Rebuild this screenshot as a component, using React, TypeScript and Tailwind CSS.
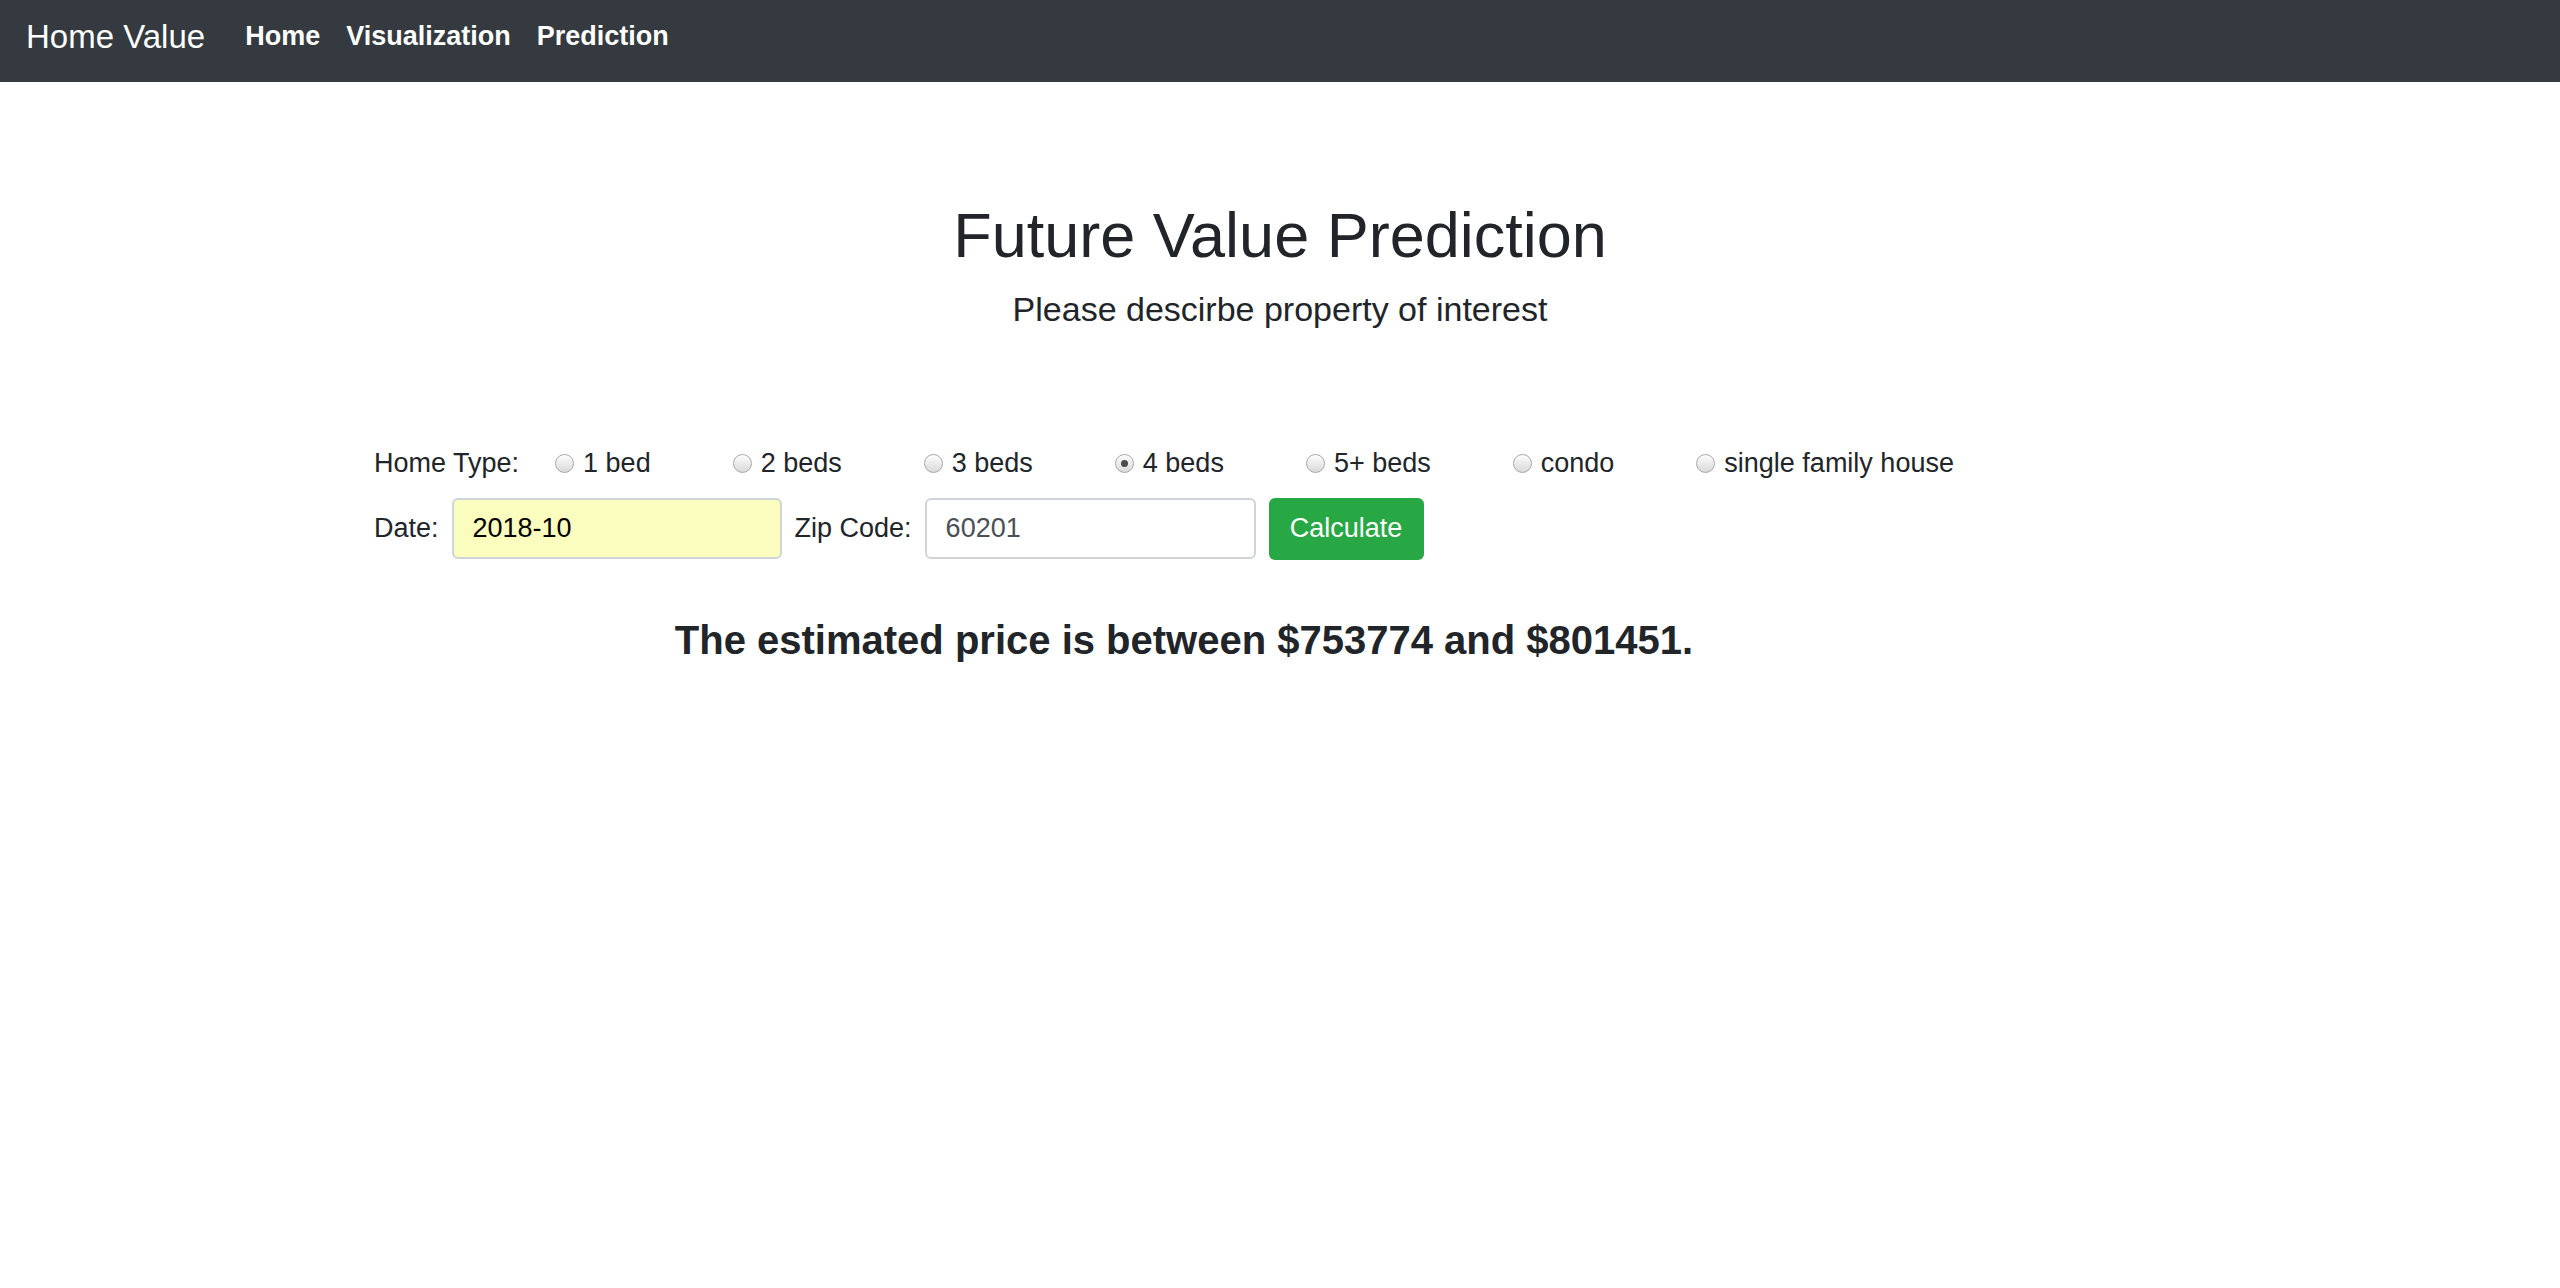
import { useState } from "react";

const homeTypes = ["1 bed", "2 beds", "3 beds", "4 beds", "5+ beds", "condo", "single family house"];

function Radio({ label, checked, onSelect }: { label: string; checked: boolean; onSelect: () => void }) {
  return (
    <label className="mr-[82px] flex shrink-0 cursor-pointer items-center whitespace-nowrap" onClick={onSelect}>
      <span className="relative flex h-[19px] w-[19px] items-center justify-center rounded-full border border-[#a7a7a7] bg-gradient-to-b from-[#fdfdfd] to-[#d9d9d9] shadow-[inset_0_1px_1px_rgba(255,255,255,0.8)]">
        {checked && <span className="h-[7px] w-[7px] rounded-full bg-[#4b4b4b]" />}
      </span>
      <span className="ml-[9px]">{label}</span>
    </label>
  );
}

export default function App() {
  const [homeType, setHomeType] = useState("4 beds");
  const [date, setDate] = useState("2018-10");
  const [zip, setZip] = useState("60201");

  return (
    <div className="min-h-screen bg-white text-[#212529] font-['Liberation_Sans',Arial,sans-serif]">
      {/* Navbar */}
      <nav className="flex h-[82px] items-center bg-[#343a40] px-[26px] pb-[10px]">
        <span className="mr-[40px] text-[33px] leading-none text-white">Home Value</span>
        <div className="flex gap-[26px] text-[27px] font-bold text-white">
          <a href="#">Home</a>
          <a href="#">Visualization</a>
          <a href="#">Prediction</a>
        </div>
      </nav>

      {/* Header */}
      <div className="mt-[116px] text-center">
        <h1 className="text-[63px] leading-[1.2]">Future Value Prediction</h1>
        <p className="mt-[10px] text-[34px] leading-[1.5]">Please descirbe property of interest</p>
      </div>

      {/* Form */}
      <div className="ml-[374px] mt-[109px] w-[1620px]">
        <div className="flex h-[40px] items-center whitespace-nowrap text-[27px]">
          <span className="mr-[36px] shrink-0">Home Type:</span>
          {homeTypes.map((t) => (
            <Radio key={t} label={t} checked={homeType === t} onSelect={() => setHomeType(t)} />
          ))}
        </div>

        <div className="mt-[14px] flex items-center gap-[13px] whitespace-nowrap text-[27px]">
          <span>Date:</span>
          <input
            value={date}
            onChange={(e) => setDate(e.target.value)}
            className="h-[61px] w-[330px] rounded-[6px] border-2 border-[#ced4da] bg-[#fafdbd] px-[19px] text-black outline-none"
          />
          <span>Zip Code:</span>
          <input
            value={zip}
            onChange={(e) => setZip(e.target.value)}
            className="h-[61px] w-[331px] rounded-[6px] border-2 border-[#ced4da] bg-white px-[19px] text-[#495057] outline-none"
          />
          <button className="h-[62px] w-[155px] rounded-[6px] bg-[#28a745] text-white">Calculate</button>
        </div>

        <h4 className="mt-[56px] text-center text-[40px] font-bold leading-[1.2]">
          The estimated price is between $753774 and $801451.
        </h4>
      </div>
    </div>
  );
}
